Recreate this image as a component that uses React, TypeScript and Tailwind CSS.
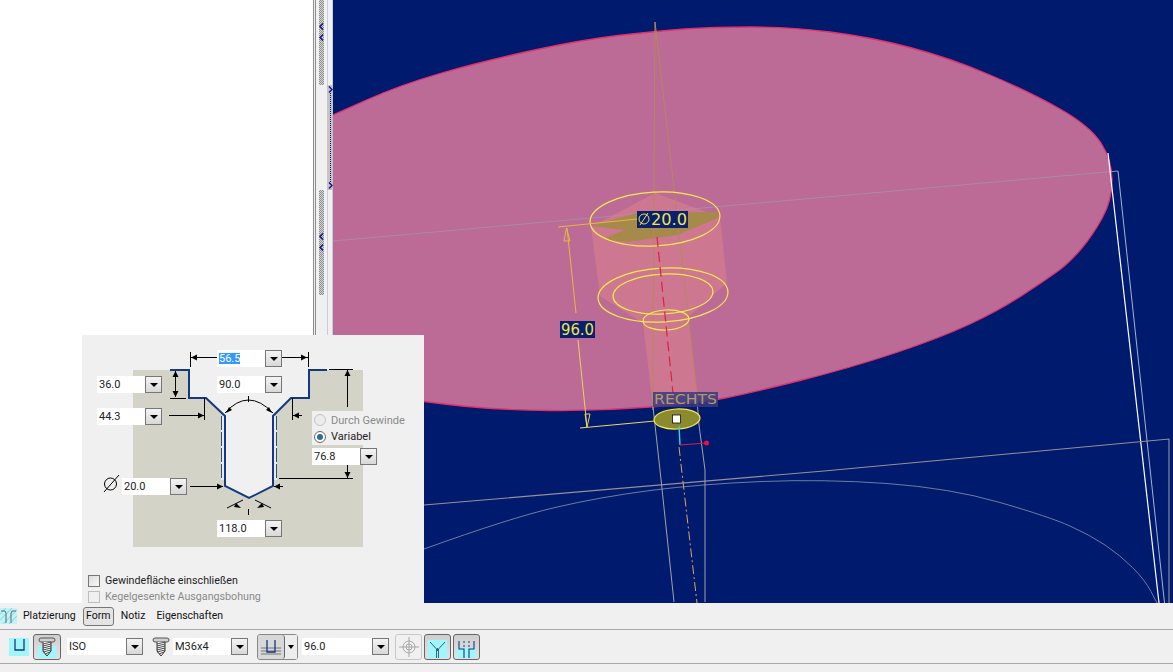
const Combo = ({ value, selected, wide }: { value: string; selected?: boolean; wide?: string }) => (
  <div className={`flex h-[17px] bg-white ${wide ?? "w-[65px]"}`}>
    <div className="flex flex-1 items-center pl-[2px] text-[11px] leading-none text-[#222]">
      <span className={selected ? "bg-[#3399ff] text-white" : ""}>{value}</span>
    </div>
    <div className="flex w-[17px] items-center justify-center border border-[#777] bg-gradient-to-b from-[#f4f4f4] to-[#d8d8d8]">
      <span className="mt-[1px] h-0 w-0 border-x-[4px] border-t-[4px] border-x-transparent border-t-black" />
    </div>
  </div>
);

const ChevLeft = () => (
  <svg width="5" height="7" viewBox="0 0 5 7" className="block">
    <path d="M4 0.5 L1 3.5 L4 6.5" fill="none" stroke="#10108a" strokeWidth="1.4" />
  </svg>
);

const ChevRight = () => (
  <svg width="5" height="7" viewBox="0 0 5 7" className="block">
    <path d="M1 0.5 L4 3.5 L1 6.5" fill="none" stroke="#10108a" strokeWidth="1.4" />
  </svg>
);

const Grip = ({ h, marks }: { h: string; marks: number[] }) => (
  <div className={`relative w-[5px] bg-[repeating-conic-gradient(#8e8e8e_0_25%,#d4d4d4_0_50%)] bg-[length:2px_2px] ${h}`}>
    {marks.map((m) => (
      <div key={m} className="absolute left-0" style={{ top: m }}>
        <ChevLeft />
      </div>
    ))}
  </div>
);

const Sash = () => (
  <div className="flex w-[20px] shrink-0 bg-[#f0f0f0]">
    <div className="h-full w-[3px] border-x border-[#8c8c8c]" />
    <div className="ml-[3px] flex w-[5px] flex-col">
      <Grip h="h-[85px]" marks={[23, 34]} />
      <div className="h-[105px]" />
      <Grip h="h-[105px]" marks={[43, 54]} />
    </div>
    <div className="ml-[3px] flex w-[6px] flex-col">
      <div className="h-[85px] border-x border-[#c3cee2]" />
      <div className="flex h-[105px] flex-col items-center justify-between bg-[#c4c4c4] py-[1px]">
        <ChevRight />
        <div className="flex-1 border-l border-dotted border-[#10108a]" />
        <ChevRight />
      </div>
      <div className="flex-1 border-x border-[#c3cee2]" />
    </div>
  </div>
);

// rounds a list of points off into quadratic segments
const smooth = (pts: number[][], closed: boolean) => {
  const mid = (a: number[], b: number[]) => `${(a[0] + b[0]) / 2} ${(a[1] + b[1]) / 2}`;
  if (closed) {
    let d = `M${mid(pts[pts.length - 1], pts[0])}`;
    pts.forEach((p, i) => {
      d += ` Q${p[0]} ${p[1]} ${mid(p, pts[(i + 1) % pts.length])}`;
    });
    return d + " Z";
  }
  let d = `M${pts[0][0]} ${pts[0][1]}`;
  for (let i = 1; i < pts.length - 1; i++) {
    d += ` Q${pts[i][0]} ${pts[i][1]} ${mid(pts[i], pts[i + 1])}`;
  }
  const last = pts[pts.length - 1];
  return d + ` L${last[0]} ${last[1]}`;
};

// the disc runs on past the left edge of the viewport
const disc = [
  [150, 250], [260, 148], [333, 115], [400, 85], [480, 62], [580, 40], [656, 31], [713, 27], [790, 27], [870, 37], [950, 58], [1030, 92], [1090, 126],
  [1112, 160], [1112, 200], [1093, 235], [1070, 262], [1050, 277], [1000, 310], [940, 338], [850, 368], [750, 393], [700, 403],
  [600, 411], [500, 410], [424, 402], [333, 388], [260, 370],
];

const curve = [
  [424, 549], [510, 518], [600, 497], [700, 484], [824, 479], [950, 488], [1050, 517], [1090, 535], [1120, 555], [1145, 580], [1157, 603],
];

const Viewport = () => (
  <svg viewBox="333 0 840 603" className="block h-full flex-1 bg-[#001a6e]">
    <path d={smooth(disc, true)} fill="#bc6b96" stroke="#e0306a" strokeWidth="1.3" />
    <polyline points="333,241 1118,171" fill="none" stroke="#a98aa8" strokeWidth="1" />
    <polyline points="1118,171 1164.5,603" fill="none" stroke="#a3b3d6" strokeWidth="1" />
    <polyline points="1108,153 1159,603" fill="none" stroke="#ffffff" strokeWidth="1.2" />
    <polyline points="424,505 824,471 1169,439 1169,603" fill="none" stroke="#9a8f96" strokeWidth="1.1" />
    <path d={smooth(curve, false)} fill="none" stroke="#7c86a8" strokeWidth="0.9" />

    {/* Bohrung */}
    <polygon points="591,227 600,296 643,323 653,407 697,393 688,317 727,283 720,217 655,193" fill="#d97f8e" fillOpacity="0.62" />
    <polygon points="591,226 637,213 717,212 718,218 677,235 627,242 603,239 625,230" fill="#a58a4a" />
    <polyline points="655,22 654,180 653,410" fill="none" stroke="#b8865f" strokeWidth="1" />
    <polyline points="655,22 673,180 697,393" fill="none" stroke="#b8865f" strokeWidth="1" />
    <polyline points="653,407 655,425 660,470 674,602" fill="none" stroke="#a8a0a0" strokeWidth="1" />
    <polyline points="697,400 699,425 705,470 705,602" fill="none" stroke="#a8a0a0" strokeWidth="1" />
    <ellipse cx="655" cy="219" rx="65" ry="27" transform="rotate(-3 655 219)" fill="none" stroke="#f5e94a" strokeWidth="1.2" />
    <ellipse cx="663" cy="295" rx="65" ry="27" transform="rotate(-3 663 295)" fill="none" stroke="#f5e94a" strokeWidth="1.2" />
    <ellipse cx="663" cy="294" rx="50" ry="20" transform="rotate(-3 663 294)" fill="none" stroke="#f5e94a" strokeWidth="1.2" />
    <ellipse cx="666" cy="320" rx="23" ry="10" transform="rotate(-3 666 320)" fill="none" stroke="#f5e94a" strokeWidth="1.2" />
    <line x1="657" y1="237" x2="673" y2="393" stroke="#e0203c" strokeWidth="1.2" strokeDasharray="10 5" />
    <line x1="679" y1="447" x2="697" y2="603" stroke="#e8a060" strokeWidth="1" strokeDasharray="9 3 2 3" />

    {/* Bemassung */}
    <polyline points="558,227 637,219" fill="none" stroke="#e6b840" strokeWidth="1" />
    <polyline points="567,228 576,313" fill="none" stroke="#e6b840" strokeWidth="1" />
    <polyline points="578,340 587,427" fill="none" stroke="#ecd060" strokeWidth="1" />
    <path d="M566.5 228 L564 241 L570 241 Z" fill="none" stroke="#e6b840" />
    <path d="M587 427 L585 414 L590 414 Z" fill="none" stroke="#ecd060" />
    <polyline points="580,428 655,421" fill="none" stroke="#ecd860" strokeWidth="1" />

    <ellipse cx="677" cy="419" rx="23" ry="10" transform="rotate(-3 677 419)" fill="#8c8a2e" stroke="#f5e94a" strokeWidth="1.2" />
    <rect x="672.5" y="415" width="8" height="8" fill="#fff" stroke="#111" strokeWidth="0.8" />
    <line x1="679" y1="426" x2="680" y2="445" stroke="#39d4e0" strokeWidth="1.4" />
    <polyline points="680,445 706,443" fill="none" stroke="#d0204c" strokeWidth="1" />
    <circle cx="706.5" cy="443" r="2.5" fill="#e8103c" />

    <rect x="637" y="211" width="51" height="17" fill="#0a1f6e" />
    <circle cx="644" cy="219" r="5" fill="none" stroke="#f0e64a" strokeWidth="1" />
    <line x1="640" y1="225" x2="648" y2="213" stroke="#f0e64a" strokeWidth="1" />
    <text x="651" y="225" textLength="36" lengthAdjust="spacingAndGlyphs" fill="#f0e64a" fontFamily="'DejaVu Sans', sans-serif" fontSize="16">
      20.0
    </text>
    <rect x="560" y="321" width="35" height="17" fill="#0a1f6e" />
    <text x="561" y="335" textLength="33" lengthAdjust="spacingAndGlyphs" fill="#f0e64a" fontFamily="'DejaVu Sans', sans-serif" fontSize="16">
      96.0
    </text>
    <rect x="653" y="392" width="65" height="15" fill="#3a3a80" fillOpacity="0.85" />
    <text x="654" y="404" textLength="63" lengthAdjust="spacingAndGlyphs" fill="#b09a68" fontFamily="'DejaVu Sans', sans-serif" fontSize="14">
      RECHTS
    </text>
  </svg>
);

const arrow = (x: number, y: number, dir: "l" | "r" | "u" | "d") => {
  const p = {
    l: `${x},${y} ${x + 6},${y - 3} ${x + 6},${y + 3}`,
    r: `${x},${y} ${x - 6},${y - 3} ${x - 6},${y + 3}`,
    u: `${x},${y} ${x - 3},${y + 6} ${x + 3},${y + 6}`,
    d: `${x},${y} ${x - 3},${y - 6} ${x + 3},${y - 6}`,
  }[dir];
  return <polygon key={`${x}-${y}-${dir}`} points={p} fill="#000" />;
};

const ProfileDrawing = () => (
  <svg viewBox="82 335 342 268" className="absolute left-0 top-0 h-[268px] w-[342px]">
    <rect x="133" y="370" width="230" height="177" fill="#d4d3c8" />
    <polygon points="189,370 189,398 206,398 225,416 225,486 249,498 273,486 273,416 291,398 309,398 309,370" fill="#f0f0f0" />
    <rect x="221" y="416" width="4" height="64" fill="#e8ebf4" />
    <rect x="273" y="416" width="4" height="64" fill="#e8ebf4" />
    <line x1="221.5" y1="416" x2="221.5" y2="480" stroke="#2a4a80" strokeWidth="1" strokeDasharray="14 2" />
    <line x1="276.5" y1="416" x2="276.5" y2="480" stroke="#2a4a80" strokeWidth="1" strokeDasharray="14 2" />
    <polyline
      points="170,370 189,370 189,398 206,398 225,416 225,486 249,498 273,486 273,416 291,398 309,398 309,370 327,370"
      fill="none"
      stroke="#123a82"
      strokeWidth="2"
    />
    <g stroke="#000" strokeWidth="1" fill="none">
      <path d="M190.5 352 V367 M308.5 352 V367 M190 357.5 H217 M282 357.5 H308" />
      <path d="M175.5 371 V397 M170 398.5 H186" />
      <path d="M169 415.5 H204 M204.5 398 V420 M292.5 398 V420 M293 415.5 H302" />
      <path d="M225 413 Q248 387 273 413 M248.5 396 V402" />
      <path d="M347.5 370 V407 M329 369.5 H353 M347.5 465 V478 M279 478.5 H353" />
      <path d="M190 486.5 H223 M274 486.5 H283" />
      <path d="M227 508 L243 500 M271 508 L255 500 M248.5 509 V515" />
      <path d="M119 475 L104 492" />
      <circle cx="110.5" cy="484" r="6" />
    </g>
    {arrow(191, 357.5, "l")}
    {arrow(307, 357.5, "r")}
    {arrow(175.5, 371, "u")}
    {arrow(175.5, 397, "d")}
    {arrow(204, 415.5, "r")}
    {arrow(293, 415.5, "l")}
    {arrow(347.5, 370, "u")}
    {arrow(347.5, 478, "d")}
    {arrow(223, 486.5, "r")}
    {arrow(274, 486.5, "l")}
    <polygon points="226,413 229,407 232,410" fill="#000" />
    <polygon points="272,413 269,407 266,410" fill="#000" />
    <polygon points="241,508 236,503 234,507" fill="#000" />
    <polygon points="257,508 262,503 264,507" fill="#000" />
  </svg>
);

const FormPanel = () => (
  <div className="absolute left-[82px] top-[335px] h-[268px] w-[342px] bg-[#f0f0f0]">
    <ProfileDrawing />
    <div className="absolute left-[135px] top-[15px]">
      <Combo value="56.5" selected />
    </div>
    <div className="absolute left-[135px] top-[41px]">
      <Combo value="90.0" />
    </div>
    <div className="absolute left-[15px] top-[41px]">
      <Combo value="36.0" />
    </div>
    <div className="absolute left-[15px] top-[73px]">
      <Combo value="44.3" />
    </div>
    <div className="absolute left-[230px] top-[76px] flex h-[34px] w-[93px] flex-col bg-[#f0f0f0] pl-[2px] pt-[1px] text-[11px] leading-none">
      <div className="flex h-[17px] items-center gap-[5px] text-[#8a8a8a]">
        <span className="h-[12px] w-[12px] rounded-full border border-[#c4c4c4] bg-[#ececec]" />
        Durch Gewinde
      </div>
      <div className="flex h-[17px] items-center gap-[5px] text-[#222]">
        <span className="flex h-[12px] w-[12px] items-center justify-center rounded-full border border-[#6a6a6a] bg-white">
          <span className="h-[6px] w-[6px] rounded-full bg-[#2a6f9f]" />
        </span>
        Variabel
      </div>
    </div>
    <div className="absolute left-[230px] top-[113px]">
      <Combo value="76.8" />
    </div>
    <div className="absolute left-[40px] top-[143px]">
      <Combo value="20.0" />
    </div>
    <div className="absolute left-[135px] top-[185px]">
      <Combo value="118.0" />
    </div>
    <div className="absolute left-[6px] top-[240px] flex flex-col gap-[4px] text-[10.7px] leading-none">
      <label className="flex h-[12px] items-center gap-[5px] text-[#222]">
        <span className="h-[12px] w-[12px] border border-[#777] bg-gradient-to-br from-[#dcdcdc] to-[#f8f8f8]" />
        Gewindefläche einschließen
      </label>
      <label className="flex h-[12px] items-center gap-[5px] text-[#8a8a8a]">
        <span className="h-[12px] w-[12px] border border-[#bdbdbd] bg-[#f0f0f0]" />
        Kegelgesenkte Ausgangsbohung
      </label>
    </div>
  </div>
);

const ToolButton = ({ children, off, wide }: { children: React.ReactNode; off?: boolean; wide?: boolean }) => (
  <div
    className={`flex h-[26px] items-center justify-center rounded-[3px] border ${wide ? "w-[28px]" : "w-[27px]"} ${
      off ? "border-[#c8c8c8] bg-[#f0f0f0]" : "border-[#666] bg-gradient-to-b from-[#cfcfcf] to-[#e2e2e2]"
    }`}
  >
    {children}
  </div>
);

const Screw = ({ cyan }: { cyan?: boolean }) => (
  <svg width="18" height="22" viewBox="0 0 18 22" className="block">
    {cyan && <rect x="0" y="10" width="18" height="12" fill="#9ff6fb" />}
    <rect x="1" y="2" width="16" height="4" rx="2" fill="#d0d0d0" stroke="#555" strokeWidth="1" />
    <path d="M5 6 V15 L9 20 L13 15 V6" fill="#fff" stroke="#333" strokeWidth="1" />
    <path d="M5 8 L13 6 M5 10 L13 8 M5 12 L13 10 M5 14 L13 12 M5 16 L13 14 M7 18 L12 16" stroke="#333" strokeWidth="0.9" />
  </svg>
);

const BottomBar = () => (
  <div className="flex flex-1 flex-col bg-[#f0f0f0]">
    <div className="flex h-[26px] items-center text-[10.5px] leading-none text-[#111]">
      <svg width="17" height="16" viewBox="0 0 17 16" className="block">
        <rect width="17" height="16" fill="#c4f2f6" />
        <path d="M0 6 L6 0 M0 12 L12 0 M3 16 L17 2 M9 16 L17 8" stroke="#88e4ec" strokeWidth="1.2" />
        <path d="M1 3 H5 L6 5 V15 M16 3 H12 L11 5 V15" fill="none" stroke="#667" strokeWidth="1" />
      </svg>
      <span className="ml-[6px]">Platzierung</span>
      <span className="ml-[7px] flex h-[19px] w-[31px] items-center justify-center rounded-[3px] border border-[#777] bg-[#e4e4e4]">
        Form
      </span>
      <span className="ml-[7px]">Notiz</span>
      <span className="ml-[11px]">Eigenschaften</span>
    </div>
    <div className="flex h-[35px] items-center border-y border-[#a8a8a8] pl-[9px]">
      <svg width="20" height="18" viewBox="0 0 20 18" className="block">
        <rect width="20" height="18" fill="#9ff6fb" />
        <path d="M6 1 V12 H15 V1" fill="none" stroke="#123a82" strokeWidth="1.3" />
      </svg>
      <div className="ml-[4px]">
        <ToolButton wide>
          <Screw cyan />
        </ToolButton>
      </div>
      <div className="ml-[6px]">
        <Combo value="ISO" wide="w-[76px]" />
      </div>
      <div className="ml-[9px]">
        <Screw />
      </div>
      <div className="ml-[3px]">
        <Combo value="M36x4" wide="w-[75px]" />
      </div>
      <div className="ml-[9px] flex h-[26px] w-[41px] rounded-[3px] border border-[#888]">
        <div className="flex w-[27px] items-center justify-center rounded-[3px] border-r border-[#666] bg-[#d8d8d8]">
          <svg width="20" height="18" viewBox="0 0 20 18" className="block">
            <path d="M0 10 H20 M0 13 H20 M0 16 H20" stroke="#777" strokeWidth="1" />
            <path d="M6 2 V14 H14 V2" fill="none" stroke="#123a82" strokeWidth="1.3" />
          </svg>
        </div>
        <div className="flex flex-1 items-center justify-center bg-[#ededed]">
          <span className="h-0 w-0 border-x-[3px] border-t-[4px] border-x-transparent border-t-black" />
        </div>
      </div>
      <div className="ml-[4px]">
        <Combo value="96.0" wide="w-[87px]" />
      </div>
      <div className="ml-[6px]">
        <ToolButton off>
          <svg width="20" height="20" viewBox="0 0 20 20" className="block">
            <g fill="none" stroke="#a8a8a8" strokeWidth="1">
              <circle cx="10" cy="10" r="6" />
              <circle cx="10" cy="10" r="3" />
              <path d="M10 0 V20 M0 10 H20" />
            </g>
          </svg>
        </ToolButton>
      </div>
      <div className="ml-[2px]">
        <ToolButton>
          <svg width="21" height="22" viewBox="0 0 21 22" className="block">
            <rect x="1" y="4" width="19" height="18" fill="#9ff6fb" />
            <path d="M3 6 L9.5 13 V22 M18 6 L11.5 13 V22" fill="none" stroke="#36607f" strokeWidth="1" />
            <path d="M10.5 12 V15" stroke="#36607f" strokeWidth="1" />
          </svg>
        </ToolButton>
      </div>
      <div className="ml-[2px]">
        <ToolButton>
          <svg width="21" height="22" viewBox="0 0 21 22" className="block">
            <rect x="1" y="12" width="19" height="10" fill="#9ff6fb" />
            <path d="M3 5 V13 H8 V22 M18 5 V13 H13 V22" fill="none" stroke="#123a82" strokeWidth="1.1" />
            <path d="M8 5 V12 M13 5 V12" stroke="#123a82" strokeWidth="1" strokeDasharray="2 2" />
          </svg>
        </ToolButton>
      </div>
    </div>
    <div className="flex-1" />
  </div>
);

export default function App() {
  return (
    <div className="relative flex h-[672px] w-full flex-col overflow-hidden bg-[#f0f0f0] font-['Roboto',sans-serif]">
      <div className="flex h-[603px] shrink-0">
        <div className="w-[313px] shrink-0 bg-white" />
        <Sash />
        <Viewport />
      </div>
      <FormPanel />
      <BottomBar />
    </div>
  );
}
